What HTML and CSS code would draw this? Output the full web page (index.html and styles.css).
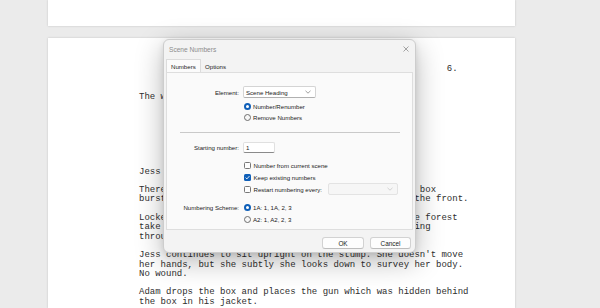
FILE: index.html
```html
<!DOCTYPE html>
<html>

<head>
    <link rel="stylesheet" href="styles.css">
</head>

<body>
    <div id="workspace">
        <div class="page page-top"></div>
        <div class="page page-main">
<pre class="script">                                                         6.


The woods are quiet.







Jess sits still.

There is a loud BANG! and a bullet rips through the box
bursting through the lid, leaving a jagged hole in the front.

Locke ducks and spins round, staring wildly into the forest
take in the scene, hands shaking, his gun now pointing
through the trees.

Jess continues to sit upright on the stump. She doesn't move
her hands, but she subtly she looks down to survey her body.
No wound.

Adam drops the box and places the gun which was hidden behind
the box in his jacket.</pre>
        </div>
    </div>

    <div id="dialog">
        <div class="titlebar">
            <span class="title">Scene Numbers</span>
            <svg class="close" width="6" height="6" viewBox="0 0 6 6">
                <path d="M0.5 0.5 L5.5 5.5 M5.5 0.5 L0.5 5.5" stroke="#9a9a9a" stroke-width="0.9" fill="none" />
            </svg>
        </div>

        <div class="tabs">
            <div class="tab active">Numbers</div>
            <div class="tab">Options</div>
        </div>

        <div class="panel">
            <div class="row row-element">
                <div class="label">Element:</div>
                <div class="select">
                    <span>Scene Heading</span>
                    <svg width="6" height="4" viewBox="0 0 6 4">
                        <path d="M0.5 0.8 L3 3.2 L5.5 0.8" stroke="#777" stroke-width="0.7" fill="none" />
                    </svg>
                </div>
            </div>
            <div class="row row-opt first">
                <div class="label"></div>
                <div class="option"><span class="radio on"></span>Number/Renumber</div>
            </div>
            <div class="row row-opt">
                <div class="label"></div>
                <div class="option"><span class="radio"></span>Remove Numbers</div>
            </div>

            <div class="separator"></div>

            <div class="row row-start">
                <div class="label">Starting number:</div>
                <div class="input">1</div>
            </div>

            <div class="group">
                <div class="row row-check">
                    <div class="label"></div>
                    <div class="option"><span class="check"></span>Number from current scene</div>
                </div>
                <div class="row row-check">
                    <div class="label"></div>
                    <div class="option"><span class="check on">
                            <svg width="7" height="7" viewBox="0 0 7 7">
                                <path d="M1.6 3.6 L2.9 4.9 L5.4 2.1" stroke="#fff" stroke-width="0.9" fill="none" />
                            </svg>
                        </span>Keep existing numbers</div>
                </div>
                <div class="row row-check">
                    <div class="label"></div>
                    <div class="option"><span class="check"></span>Restart numbering every:
                        <div class="select disabled">
                            <span></span>
                            <svg width="6" height="4" viewBox="0 0 6 4">
                                <path d="M0.5 0.8 L3 3.2 L5.5 0.8" stroke="#c4c4c4" stroke-width="0.7" fill="none" />
                            </svg>
                        </div>
                    </div>
                </div>
            </div>

            <div class="group">
                <div class="row row-check">
                    <div class="label">Numbering Scheme:</div>
                    <div class="option"><span class="radio on"></span>1A: 1, 1A, 2, 3</div>
                </div>
                <div class="row row-check">
                    <div class="label"></div>
                    <div class="option"><span class="radio"></span>A2: 1, A2, 2, 3</div>
                </div>
            </div>
        </div>

        <div class="buttons">
            <div class="button ok">OK</div>
            <div class="button cancel">Cancel</div>
        </div>
    </div>
</body>

</html>
```
FILE: styles.css
```css
body {
    margin: 0;
    width: 600px;
    height: 308px;
    overflow: hidden;
    background-color: #ebebeb;
    position: relative;
}

/* pages of the screenplay */

#workspace {
    padding-left: 48px;
    display: flex;
    flex-direction: column;
    gap: 12px;
}

.page {
    width: 467px;
    background-color: #fff;
    box-shadow: 0 0 2px rgba(0, 0, 0, 0.18);
}

.page-top {
    height: 26px;
}

.page-main {
    height: 270px;
    overflow: hidden;
    box-sizing: border-box;
    padding: 27.3px 0 0 91px;
}

.script {
    margin: 0;
    font-family: "Liberation Mono", "Courier New", monospace;
    font-size: 9px;
    line-height: 9.3px;
    color: #2e2e2e;
}

/* Scene Numbers dialog */

#dialog {
    position: absolute;
    left: 163px;
    top: 39px;
    width: 253px;
    box-sizing: border-box;
    background-color: #f3f3f3;
    border: 1px solid #cdcdcd;
    border-radius: 6px;
    box-shadow: 0 8px 28px rgba(0, 0, 0, 0.28), 0 2px 6px rgba(0, 0, 0, 0.1);
    font-family: "Liberation Sans", Arial, sans-serif;
    font-size: 6.1px;
    color: #1b1b1b;
}

.titlebar {
    height: 18px;
    display: flex;
    align-items: center;
    justify-content: space-between;
    padding: 0 6px 1px 5px;
}

.title {
    font-size: 6.6px;
    color: #8c8c8c;
}

.close {
    margin-top: -1px;
}

.tabs {
    display: flex;
    height: 13px;
    padding-left: 2px;
    align-items: flex-end;
}

.tab {
    height: 11px;
    line-height: 11px;
    padding: 0 4px;
}

.tab.active {
    height: 13px;
    line-height: 13px;
    background-color: #fbfbfb;
    border: 1px solid #dcdcdc;
    border-bottom: none;
    box-sizing: border-box;
    width: 35px;
}

.panel {
    margin: 0 2px;
    background-color: #fafafa;
    border: 1px solid #dedede;
    padding: 13px 0 4px;
}

.row {
    display: flex;
    align-items: center;
    gap: 4px;
}

.label {
    width: 72px;
    flex-shrink: 0;
    text-align: right;
}

.row-element {
    height: 12px;
}

.row-opt {
    height: 11px;
}

.row-opt.first {
    margin-top: 3px;
}

.separator {
    height: 1px;
    background-color: #c9c9c9;
    margin: 9px 12px 0 13px;
}

.row-start {
    height: 11px;
    margin-top: 9px;
}

.group {
    margin-top: 6px;
}

.row-check {
    height: 12px;
}

.option {
    display: flex;
    align-items: center;
    gap: 2.5px;
}

.select {
    width: 73px;
    height: 12px;
    box-sizing: border-box;
    background-color: #fff;
    border: 1px solid #d4d4d4;
    border-bottom-color: #b0b0b0;
    border-radius: 2px;
    display: flex;
    align-items: center;
    justify-content: space-between;
    padding: 0 4px 0 2px;
}

.select.disabled {
    width: 70px;
    background-color: #f6f6f6;
    border-color: #e3e3e3;
    margin-left: 4px;
}

.input {
    width: 32px;
    height: 11px;
    box-sizing: border-box;
    background-color: #fff;
    border: 1px solid #e0e0e0;
    border-bottom-color: #8a8a8a;
    border-radius: 2px;
    padding-left: 2px;
    line-height: 9px;
}

.radio {
    width: 7px;
    height: 7px;
    box-sizing: border-box;
    border: 1px solid #6e6e6e;
    border-radius: 50%;
    background-color: #f7f7f7;
    margin-left: 0.5px;
}

.radio.on {
    border: 2px solid #0f5fb8;
    background-color: #fff;
}

.check {
    width: 7px;
    height: 7px;
    box-sizing: border-box;
    border: 1px solid #777;
    border-radius: 1.5px;
    background-color: #fdfdfd;
    margin-left: 1px;
    display: flex;
}

.check.on {
    border: none;
    background-color: #0f5fb8;
}

.buttons {
    display: flex;
    justify-content: flex-end;
    gap: 6px;
    padding: 7px 4px 3px 0;
}

.button {
    height: 12px;
    box-sizing: border-box;
    background-color: #fdfdfd;
    border: 1px solid #d2d2d2;
    border-bottom-color: #bdbdbd;
    border-radius: 3px;
    display: flex;
    align-items: center;
    justify-content: center;
    font-size: 6.4px;
}

.ok {
    width: 42px;
}

.cancel {
    width: 41px;
}
```
